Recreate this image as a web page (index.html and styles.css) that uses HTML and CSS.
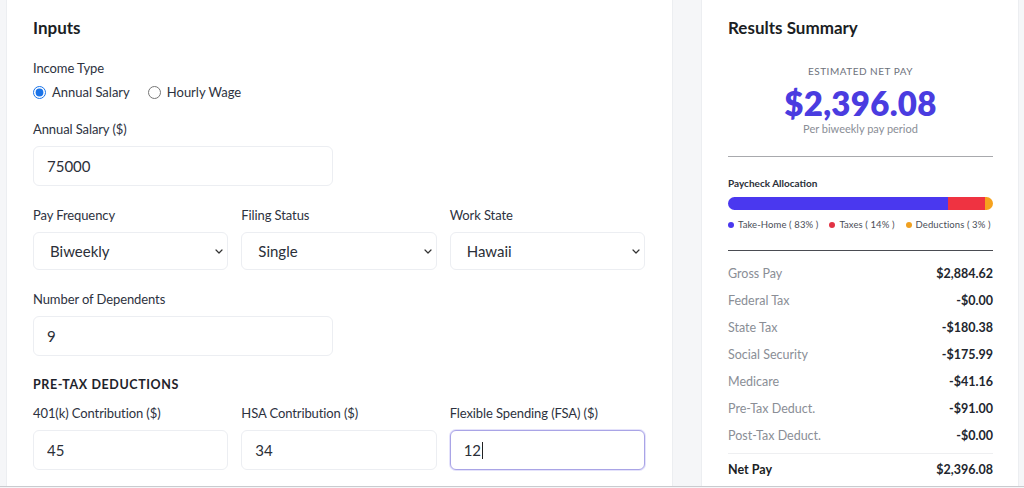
FILE: index.html
```html
<!DOCTYPE html>
<html lang="en">
<head>
<meta charset="utf-8">
<title>Paycheck Calculator</title>
<link rel="stylesheet" href="styles.css">
</head>
<body>
<div class="page">
  <section class="card inputs">
    <h2 class="card-title">Inputs</h2>

    <div class="field">
      <div class="label">Income Type</div>
      <div class="radios">
        <label class="radio"><input type="radio" name="itype" checked> Annual Salary</label>
        <label class="radio"><input type="radio" name="itype"> Hourly Wage</label>
      </div>
    </div>

    <div class="field">
      <div class="label">Annual Salary ($)</div>
      <div class="half"><input class="control" type="text" value="75000"></div>
    </div>

    <div class="field grid3">
      <div>
        <div class="label">Pay Frequency</div>
        <div class="select-wrap">
          <select class="control sel"><option>Biweekly</option></select>
          <svg class="chev" viewBox="0 0 8 5" width="8" height="5"><path d="M1 1l3 3 3-3" fill="none" stroke="#333" stroke-width="1.2" stroke-linecap="round" stroke-linejoin="round"/></svg>
        </div>
      </div>
      <div>
        <div class="label">Filing Status</div>
        <div class="select-wrap">
          <select class="control sel"><option>Single</option></select>
          <svg class="chev" viewBox="0 0 8 5" width="8" height="5"><path d="M1 1l3 3 3-3" fill="none" stroke="#333" stroke-width="1.2" stroke-linecap="round" stroke-linejoin="round"/></svg>
        </div>
      </div>
      <div>
        <div class="label">Work State</div>
        <div class="select-wrap">
          <select class="control sel"><option>Hawaii</option></select>
          <svg class="chev" viewBox="0 0 8 5" width="8" height="5"><path d="M1 1l3 3 3-3" fill="none" stroke="#333" stroke-width="1.2" stroke-linecap="round" stroke-linejoin="round"/></svg>
        </div>
      </div>
    </div>

    <div class="field">
      <div class="label">Number of Dependents</div>
      <div class="half"><input class="control" type="text" value="9"></div>
    </div>

    <div class="field">
      <div class="section-title">PRE-TAX DEDUCTIONS</div>
      <div class="grid3">
        <div>
          <div class="label">401(k) Contribution ($)</div>
          <input class="control" type="text" value="45">
        </div>
        <div>
          <div class="label">HSA Contribution ($)</div>
          <input class="control" type="text" value="34">
        </div>
        <div>
          <div class="label">Flexible Spending (FSA) ($)</div>
          <div class="control focused">12<span class="caret"></span></div>
        </div>
      </div>
    </div>

    <div class="field grid3">
      <div><div class="label">Health Insurance ($)</div></div>
      <div><div class="label">Dental Insurance ($)</div></div>
      <div><div class="label">Vision Insurance ($)</div></div>
    </div>
  </section>

  <aside class="card results">
    <h2 class="card-title">Results Summary</h2>
    <div class="hero">
      <div class="hero-label">ESTIMATED NET PAY</div>
      <div class="hero-value">$2,396.08</div>
      <div class="hero-sub">Per biweekly pay period</div>
    </div>
    <hr class="rule light">
    <div class="alloc">
      <div class="alloc-title">Paycheck Allocation</div>
      <div class="bar">
        <div class="seg blue" style="width:83%"></div>
        <div class="seg red" style="width:14%"></div>
        <div class="seg orange" style="width:3%"></div>
      </div>
      <div class="legend">
        <span class="key"><i class="dot blue"></i>Take-Home ( 83% )</span>
        <span class="key"><i class="dot red"></i>Taxes ( 14% )</span>
        <span class="key"><i class="dot orange"></i>Deductions ( 3% )</span>
      </div>
    </div>
    <hr class="rule dark">
    <div class="rows">
      <div class="row"><span>Gross Pay</span><b>$2,884.62</b></div>
      <div class="row"><span>Federal Tax</span><b>-$0.00</b></div>
      <div class="row"><span>State Tax</span><b>-$180.38</b></div>
      <div class="row"><span>Social Security</span><b>-$175.99</b></div>
      <div class="row"><span>Medicare</span><b>-$41.16</b></div>
      <div class="row"><span>Pre-Tax Deduct.</span><b>-$91.00</b></div>
      <div class="row"><span>Post-Tax Deduct.</span><b>-$0.00</b></div>
      <div class="row total"><span>Net Pay</span><b>$2,396.08</b></div>
    </div>
  </aside>
</div>
</body>
</html>
```

FILE: styles.css
```css
* { box-sizing: border-box; }
html, body { margin: 0; padding: 0; }
body {
  background: #f5f6f8;
  font-family: "Lato", "Liberation Sans", sans-serif;
  color: #2b2f38;
  overflow: hidden;
}
.page {
  height: 487px;
  border-bottom: 1px solid #c9cbcf;
  overflow: hidden;
  display: flex;
  align-items: flex-start;
  gap: 28px;
  padding: 0 5px 0 6px;
}
.card {
  background: #fff;
  border: 1px solid #eceef1;
  border-top: none;
}
.inputs {
  width: 667px;
  padding: 17px 27px 40px 26px;
}
.results {
  width: 318px;
  padding: 17px 25px 40px 26px;
}
.card-title {
  margin: 0;
  font-size: 17px;
  line-height: 22px;
  font-weight: 700;
  color: #1b1e24;
}
.field { margin-top: 21px; }
.label {
  font-size: 13px;
  line-height: 16px;
  color: #2d3240;
  margin-bottom: 9px;
  letter-spacing: -0.1px;
}
.radios {
  display: flex;
  gap: 18px;
  margin-top: -1px;
  height: 16px;
  align-items: center;
}
.radio {
  display: flex;
  align-items: center;
  gap: 6px;
  font-size: 13px;
  color: #2d3240;
}
.radio input {
  margin: 0;
  width: 13px;
  height: 13px;
  accent-color: #1a73e8;
}
.half { width: 300px; }
.grid3 {
  display: grid;
  grid-template-columns: repeat(3, 1fr);
  column-gap: 13px;
}
.control {
  display: block;
  width: 100%;
  height: 40px;
  border: 1px solid #eceef2;
  border-radius: 6px;
  background: #fff;
  font-family: inherit;
  font-size: 15px;
  color: #2b2f38;
  padding: 0 13px;
  outline: none;
}
.select-wrap { position: relative; }
.sel {
  height: 38px;
  padding: 0 24px 0 16px;
  appearance: none;
  -webkit-appearance: none;
}
.chev {
  position: absolute;
  right: 5px;
  top: 17px;
  pointer-events: none;
}
.focused {
  display: flex;
  align-items: center;
  border: 1px solid #a9a4e6;
  box-shadow: 0 0 0 1px #e4e2fb;
}
.caret {
  display: inline-block;
  width: 1px;
  height: 17px;
  background: #222;
  margin-left: 1px;
}
.section-title {
  font-size: 12.5px;
  font-weight: 700;
  letter-spacing: 0.6px;
  line-height: 16px;
  color: #1f232b;
  margin-bottom: 12px;
}

/* Results */
.hero {
  text-align: center;
  margin-top: 25px;
}
.hero-label {
  font-size: 10px;
  letter-spacing: 0.5px;
  color: #6d727b;
  line-height: 14px;
}
.hero-value {
  font-size: 33px;
  font-weight: 800;
  color: #4a3ce0;
  line-height: 36px;
  margin-top: 7px;
  letter-spacing: 0.3px;
}
.hero-sub {
  font-size: 11px;
  color: #8a8e96;
  line-height: 14px;
  margin-top: 1px;
}
.rule {
  border: none;
  height: 1px;
  margin: 0;
}
.rule.light { background: #a8a9ad; margin-top: 20px; }
.rule.dark { background: #4a4c52; margin-top: 19px; }
.alloc { margin-top: 19px; }
.alloc-title {
  font-size: 10px;
  font-weight: 700;
  color: #2b2f38;
  line-height: 14px;
}
.bar {
  display: flex;
  height: 13px;
  border-radius: 7px;
  overflow: hidden;
  margin-top: 7px;
}
.seg.blue { background: #4a38ef; }
.seg.red { background: #ef3341; }
.seg.orange { background: #f6a21d; }
.legend {
  display: flex;
  gap: 11px;
  margin-top: 9px;
  font-size: 9.5px;
  color: #4a4e57;
  line-height: 12px;
  letter-spacing: 0.1px;
}
.key { display: flex; align-items: center; gap: 4px; white-space: nowrap; }
.dot {
  display: inline-block;
  width: 6px;
  height: 6px;
  border-radius: 50%;
}
.dot.blue { background: #4a38ef; }
.dot.red { background: #e23344; }
.dot.orange { background: #f0a020; }
.rows { margin-top: 9px; }
.row {
  display: flex;
  justify-content: space-between;
  align-items: center;
  height: 27px;
  font-size: 12.5px;
}
.row span { color: #8a8e96; }
.row b { color: #22262e; font-weight: 700; }
.row.total {
  border-top: 1px solid #eeeff1;
  margin-top: 4px;
  height: 30px;
  padding-top: 2px;
}
.row.total span { color: #1b1e24; font-weight: 700; }
```
